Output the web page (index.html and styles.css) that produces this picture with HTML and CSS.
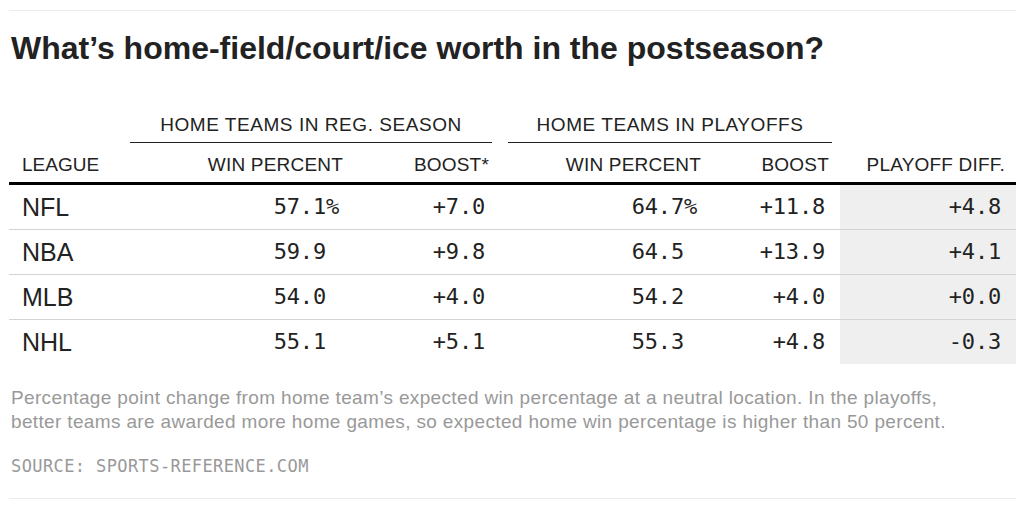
FILE: index.html
```html
<!DOCTYPE html>
<html lang="en">
<head>
<meta charset="utf-8">
<title>Home-field advantage in the postseason</title>
<link rel="stylesheet" href="styles.css">
</head>
<body>
<div class="chart">
  <h1 class="title">What’s home-field/court/ice worth in the postseason?</h1>
  <table class="tbl">
    <colgroup>
      <col class="c-league">
      <col class="c-rwin">
      <col class="c-rboost">
      <col class="c-pwin">
      <col class="c-pboost">
      <col class="c-diff">
    </colgroup>
    <thead>
      <tr class="groups">
        <th></th>
        <th colspan="2" class="grp-cell"><div class="grp">HOME TEAMS IN REG. SEASON</div></th>
        <th colspan="2" class="grp-cell"><div class="grp">HOME TEAMS IN PLAYOFFS</div></th>
        <th></th>
      </tr>
      <tr class="cols">
        <th class="left">LEAGUE</th>
        <th>WIN PERCENT</th>
        <th>BOOST*</th>
        <th>WIN PERCENT</th>
        <th>BOOST</th>
        <th>PLAYOFF DIFF.</th>
      </tr>
    </thead>
    <tbody>
      <tr>
        <td class="league">NFL</td>
        <td class="num">57.1<span class="pct">%</span></td>
        <td class="num">+7.0</td>
        <td class="num">64.7<span class="pct">%</span></td>
        <td class="num">+11.8</td>
        <td class="num diff">+4.8</td>
      </tr>
      <tr>
        <td class="league">NBA</td>
        <td class="num">59.9<span class="pct hide">%</span></td>
        <td class="num">+9.8</td>
        <td class="num">64.5<span class="pct hide">%</span></td>
        <td class="num">+13.9</td>
        <td class="num diff">+4.1</td>
      </tr>
      <tr>
        <td class="league">MLB</td>
        <td class="num">54.0<span class="pct hide">%</span></td>
        <td class="num">+4.0</td>
        <td class="num">54.2<span class="pct hide">%</span></td>
        <td class="num">+4.0</td>
        <td class="num diff">+0.0</td>
      </tr>
      <tr class="last">
        <td class="league">NHL</td>
        <td class="num">55.1<span class="pct hide">%</span></td>
        <td class="num">+5.1</td>
        <td class="num">55.3<span class="pct hide">%</span></td>
        <td class="num">+4.8</td>
        <td class="num diff">-0.3</td>
      </tr>
    </tbody>
  </table>
  <p class="note">Percentage point change from home team’s expected win percentage at a neutral location. In the playoffs, better teams are awarded more home games, so expected home win percentage is higher than 50 percent.</p>
  <p class="source">SOURCE: SPORTS-REFERENCE.COM</p>
</div>
</body>
</html>
```
FILE: styles.css
```css
html, body {
  margin: 0;
  padding: 0;
  background: #fff;
}

body {
  font-family: "Liberation Sans", Arial, sans-serif;
  color: #222;
}

.chart {
  width: 1007px;
  margin: 10px 0 0 9px;
  border-top: 1px solid #ebebeb;
  border-bottom: 1px solid #ebebeb;
}

.title {
  margin: 19px 0 47px 2px;
  font-size: 32px;
  line-height: 37px;
  font-weight: bold;
  color: #222;
}

.tbl {
  width: 1007px;
  table-layout: fixed;
  border-collapse: separate;
  border-spacing: 0;
}

.c-league { width: 113px; }
.c-rwin { width: 232px; }
.c-rboost { width: 146px; }
.c-pwin { width: 212px; }
.c-pboost { width: 128px; }
.c-diff { width: 176px; }

.tbl th {
  font-weight: normal;
  font-size: 19px;
  line-height: 22px;
  color: #222;
  padding: 0;
}

.groups th {
  vertical-align: bottom;
}

.grp-cell {
  padding: 0 8px !important;
}

.grp {
  text-align: center;
  letter-spacing: 0.55px;
  padding-bottom: 6px;
  border-bottom: 1px solid #222;
}

.cols th {
  text-align: right;
  letter-spacing: 0.2px;
  padding: 11px 11px 6px 0;
  border-bottom: 3px solid #000;
  white-space: nowrap;
}

.cols th.left {
  text-align: left;
  letter-spacing: 0;
  padding-left: 13px;
}

.tbl td {
  padding: 0;
  line-height: 44px;
  border-bottom: 1px solid #d3d3d3;
  white-space: nowrap;
}

.tbl tr.last td {
  border-bottom: 0;
}

.league {
  font-size: 25px;
  padding-left: 13px !important;
  color: #222;
}

.num {
  font-family: "DejaVu Sans Mono", "Liberation Mono", monospace;
  font-size: 22px;
  letter-spacing: -0.2px;
  text-align: right;
  padding-right: 15px !important;
  color: #222;
}

.pct.hide {
  visibility: hidden;
}

.diff {
  background: #efefef;
}

.note {
  margin: 22px 0 0 2px;
  max-width: 970px;
  font-size: 19px;
  letter-spacing: 0.35px;
  line-height: 24px;
  color: #999;
}

.source {
  margin: 22px 0 22px 2px;
  font-family: "DejaVu Sans Mono", "Liberation Mono", monospace;
  font-size: 17px;
  line-height: 20px;
  letter-spacing: 0.4px;
  color: #999;
}
```
